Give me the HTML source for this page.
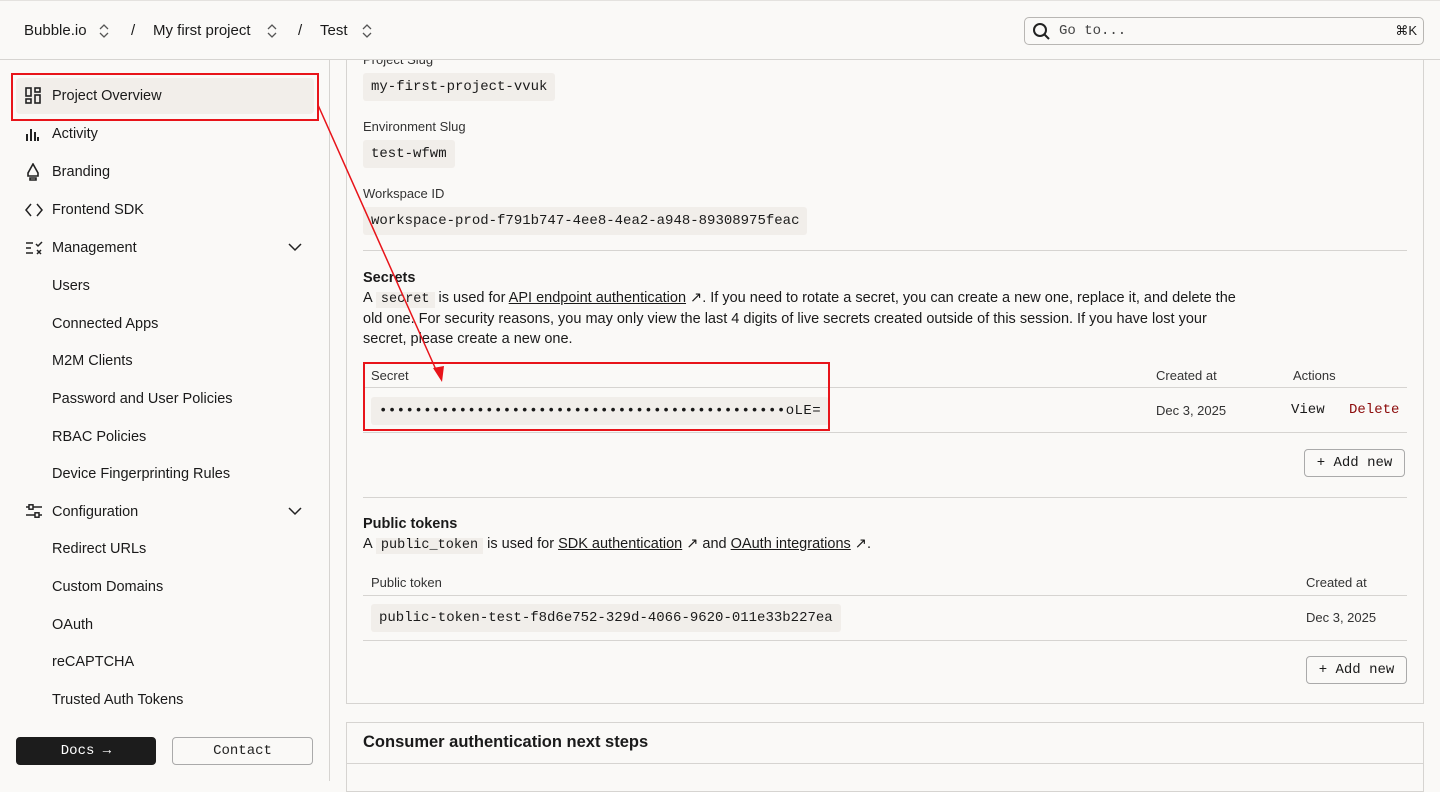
<!DOCTYPE html>
<html><head><meta charset="utf-8"><style>
*{box-sizing:border-box;margin:0;padding:0}
body{width:1440px;height:781px;overflow:hidden;background:#faf9f7;font-family:"Liberation Sans",sans-serif;color:#1a1a1a;font-size:14px;position:relative}
.mono{font-family:"Liberation Mono",monospace}
.hdr{position:absolute;left:0;top:0;width:1440px;height:60px;border-bottom:1px solid #d6d4d1;border-top:1px solid #e4e2df;background:#faf9f7;z-index:2}
.hdr span{position:absolute;top:21px;font-size:15px}
.hdr svg.ch{position:absolute;top:23px}
.search{position:absolute;left:1024px;top:16px;width:400px;height:28px;border:1px solid #b8b6b3;border-radius:5px}
.side{position:absolute;left:0;top:60px;width:330px;height:721px;border-right:1px solid #d6d4d1}
.nav{position:absolute;left:52px;font-size:14.5px}
.ico{position:absolute;left:25px}
.code{background:#f1eeea;border-radius:3px;padding:0 8px;display:inline-block;font-family:"Liberation Mono",monospace;font-size:14px;line-height:28px;position:absolute}
.lbl{position:absolute;left:363px;font-size:13px;color:#333}
.card{position:absolute;left:346px;top:40px;width:1078px;height:664px;border:1px solid #d6d4d1;border-top:none}
.line{position:absolute;height:1px;background:#d6d4d1}
.p{position:absolute;left:363px;font-size:14.5px;line-height:20.5px;width:885px}
.p u{text-decoration:underline}
.ic{font-family:"Liberation Mono",monospace;background:#f1eeea;padding:0 5px;font-size:13.5px;line-height:16px;display:inline-block}
.btn{position:absolute;border:1px solid #aaa;border-radius:4px;font-family:"Liberation Mono",monospace;font-size:14px;text-align:center;line-height:26px}
.red{position:absolute;border:2px solid #e8141a}
</style></head><body>
<div class="card"></div>
<div class="hdr">
<span style="left:24px">Bubble.io</span><svg class="ch" style="left:99px" width="10" height="14"><path d="M1 5L5 1L9 5M1 9L5 13L9 9" fill="none" stroke="#555" stroke-width="1.3"/></svg>
<span style="left:131px">/</span><span style="left:153px">My first project</span><svg class="ch" style="left:267px" width="10" height="14"><path d="M1 5L5 1L9 5M1 9L5 13L9 9" fill="none" stroke="#555" stroke-width="1.3"/></svg>
<span style="left:298px">/</span><span style="left:320px">Test</span><svg class="ch" style="left:362px" width="10" height="14"><path d="M1 5L5 1L9 5M1 9L5 13L9 9" fill="none" stroke="#555" stroke-width="1.3"/></svg>
<div class="search"><svg style="position:absolute;left:7px;top:4px" width="19" height="19" viewBox="0 0 19 19"><circle cx="8" cy="8" r="6" fill="none" stroke="#222" stroke-width="2"/><path d="M12.5 12.5L17 17" stroke="#222" stroke-width="2"/></svg><span class="mono" style="position:absolute;left:34px;top:5px;font-size:14px;color:#444">Go to...</span><span style="position:absolute;right:6px;top:5px;font-size:13px">⌘K</span></div>
</div>
<div class="side">
<div style="position:absolute;left:16px;top:18px;width:298px;height:36px;background:#f2eeea;border-radius:4px"></div>
<svg class="ico" style="top:27px" width="16" height="17" viewBox="0 0 16 17"><g fill="none" stroke="#222" stroke-width="1.6"><rect x="1" y="1" width="5" height="8"/><rect x="10" y="1" width="5" height="4"/><rect x="1" y="12" width="5" height="4"/><rect x="10" y="8" width="5" height="8"/></g></svg>
<div class="nav" style="top:28px">Project Overview</div>
<svg class="ico" style="top:67px" width="14" height="14"><g fill="#222"><rect x="1" y="7" width="2" height="7"/><rect x="5" y="2" width="2" height="12"/><rect x="9" y="5" width="2" height="9"/><rect x="12" y="10" width="2" height="4"/></g></svg>
<div class="nav" style="top:66px">Activity</div>
<svg class="ico" style="top:103px" width="16" height="18"><path d="M8 1L3 10L3 13L13 13L13 10Z M5 15H11V17H5Z" fill="none" stroke="#222" stroke-width="1.6"/></svg>
<div class="nav" style="top:104px">Branding</div>
<svg class="ico" style="top:143px" width="18" height="14"><path d="M6 1L1 7L6 13M12 1L17 7L12 13" fill="none" stroke="#222" stroke-width="1.5"/></svg>
<div class="nav" style="top:142px">Frontend SDK</div>
<svg class="ico" style="top:181px" width="18" height="14"><path d="M1 2H8M1 7H6M1 12H8M11 3L13 5L17 1M12 9L16 13M16 9L12 13" fill="none" stroke="#222" stroke-width="1.5"/></svg>
<div class="nav" style="top:180px">Management</div>
<svg style="position:absolute;left:288px;top:183px" width="14" height="9"><path d="M1 1L7 7L13 1" fill="none" stroke="#222" stroke-width="1.5"/></svg>
<div class="nav" style="top:218px">Users</div>
<div class="nav" style="top:256px">Connected Apps</div>
<div class="nav" style="top:293px">M2M Clients</div>
<div class="nav" style="top:331px">Password and User Policies</div>
<div class="nav" style="top:369px">RBAC Policies</div>
<div class="nav" style="top:406px">Device Fingerprinting Rules</div>
<svg class="ico" style="top:444px" width="18" height="14"><path d="M1 3H17M1 11H17" stroke="#222" stroke-width="1.5"/><rect x="4" y="0.8" width="4" height="4.4" fill="#faf9f7" stroke="#222" stroke-width="1.5"/><rect x="10" y="8.8" width="4" height="4.4" fill="#faf9f7" stroke="#222" stroke-width="1.5"/></svg>
<div class="nav" style="top:444px">Configuration</div>
<svg style="position:absolute;left:288px;top:447px" width="14" height="9"><path d="M1 1L7 7L13 1" fill="none" stroke="#222" stroke-width="1.5"/></svg>
<div class="nav" style="top:481px">Redirect URLs</div>
<div class="nav" style="top:519px">Custom Domains</div>
<div class="nav" style="top:557px">OAuth</div>
<div class="nav" style="top:594px">reCAPTCHA</div>
<div class="nav" style="top:632px">Trusted Auth Tokens</div>
<div class="btn" style="left:16px;top:677px;width:140px;height:28px;background:#1c1c1c;color:#fff;border-color:#1c1c1c">Docs →</div>
<div class="btn" style="left:172px;top:677px;width:141px;height:28px;color:#222">Contact</div>
</div>
<div class="red" style="left:11px;top:73px;width:308px;height:48px"></div>

<div class="lbl" style="top:52px">Project Slug</div>
<div class="code" style="left:363px;top:73px">my-first-project-vvuk</div>
<div class="lbl" style="top:119px">Environment Slug</div>
<div class="code" style="left:363px;top:140px">test-wfwm</div>
<div class="lbl" style="top:186px">Workspace ID</div>
<div class="code" style="left:363px;top:207px">workspace-prod-f791b747-4ee8-4ea2-a948-89308975feac</div>
<div class="line" style="left:363px;top:250px;width:1044px"></div>
<div class="p" style="top:268px;font-weight:bold">Secrets</div>
<div class="p" style="top:288px">A <span class="ic">secret</span> is used for <u>API endpoint authentication</u> ↗. If you need to rotate a secret, you can create a new one, replace it, and delete the old one. For security reasons, you may only view the last 4 digits of live secrets created outside of this session. If you have lost your secret, please create a new one.</div>
<div class="lbl" style="top:368px;left:371px">Secret</div>
<div class="lbl" style="top:368px;left:1156px">Created at</div>
<div class="lbl" style="top:368px;left:1293px">Actions</div>
<div class="line" style="left:363px;top:387px;width:1044px"></div>
<div class="code" style="left:371px;top:397px;font-size:14px;letter-spacing:0.44px">••••••••••••••••••••••••••••••••••••••••••••••oLE=</div>
<div class="lbl" style="top:403px;left:1156px">Dec 3, 2025</div>
<div class="mono" style="position:absolute;left:1291px;top:402px;font-size:14px">View</div>
<div class="mono" style="position:absolute;left:1349px;top:402px;font-size:14px;color:#8b0a0a">Delete</div>
<div class="line" style="left:363px;top:432px;width:1044px"></div>
<div class="btn" style="left:1304px;top:449px;width:101px;height:28px">+ Add new</div>
<div class="line" style="left:363px;top:497px;width:1044px"></div>
<div class="p" style="top:514px;font-weight:bold">Public tokens</div>
<div class="p" style="top:534px">A <span class="ic">public_token</span> is used for <u>SDK authentication</u> ↗ and <u>OAuth integrations</u> ↗.</div>
<div class="lbl" style="top:575px;left:371px">Public token</div>
<div class="lbl" style="top:575px;left:1306px">Created at</div>
<div class="line" style="left:363px;top:595px;width:1044px"></div>
<div class="code" style="left:371px;top:604px">public-token-test-f8d6e752-329d-4066-9620-011e33b227ea</div>
<div class="lbl" style="top:610px;left:1306px">Dec 3, 2025</div>
<div class="line" style="left:363px;top:640px;width:1044px"></div>
<div class="btn" style="left:1306px;top:656px;width:101px;height:28px">+ Add new</div>
<div style="position:absolute;left:346px;top:722px;width:1078px;height:70px;border:1px solid #d6d4d1"></div>
<div class="line" style="left:347px;top:763px;width:1076px"></div>
<div style="position:absolute;left:363px;top:733px;font-size:16.5px;font-weight:bold">Consumer authentication next steps</div>
<div class="red" style="left:363px;top:362px;width:467px;height:69px"></div>
<svg style="position:absolute;left:0;top:0;z-index:3" width="1440" height="781"><path d="M318 105L437 372" stroke="#e8141a" stroke-width="1.5"/><path d="M433 368L442 382L444 366Z" fill="#e8141a"/></svg>
</body></html>
